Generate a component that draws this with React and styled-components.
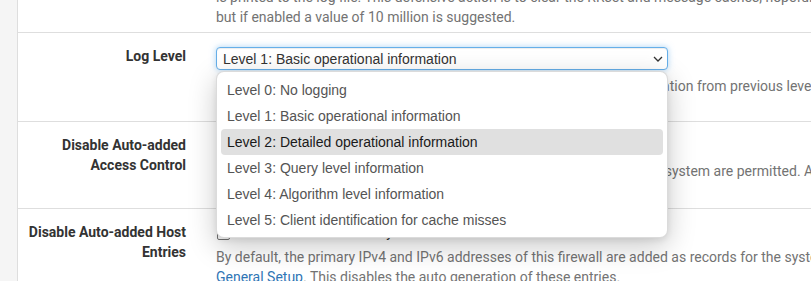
import React from "react";
import styled, { createGlobalStyle } from "styled-components";

const Global = createGlobalStyle`
  html, body { margin: 0; padding: 0; overflow: hidden; background: #fff; }
  body { font-family: Roboto, "Liberation Sans", sans-serif; font-size: 14px; color: #333; }
`;

const Page = styled.div`
  display: flex;
  width: 1400px;
  margin-top: -13px;
  min-height: 320px;
`;

const Gutter = styled.div`
  width: 17px;
  flex: none;
  background: #f5f5f5;
  border-right: 1px solid #dedede;
`;

const Panel = styled.div`
  flex: 1;
  display: flex;
  flex-direction: column;
  background: #fff;
`;

const Row = styled.div`
  display: grid;
  grid-template-columns: 183px 1fr;
  border-top: ${(p) => (p.$first ? "none" : "1px solid #dedede")};
  padding: ${(p) => (p.$first ? "0" : "13px")} 0 ${(p) => p.$pb || 5}px;
`;

const Label = styled.div`
  padding-right: 15px;
  text-align: right;
  font-weight: 700;
  line-height: 20px;
  color: #333;
`;

const Content = styled.div`
  padding-left: 15px;
  position: relative;
`;

const Help = styled.div`
  color: #737373;
  line-height: 20px;
  margin-top: ${(p) => p.$mt || 0}px;
  white-space: nowrap;
`;

const Link = styled.a`
  color: #2f75b5;
  text-decoration: underline;
`;

const SelectWrap = styled.div`
  position: relative;
  width: 452px;
  margin-top: 1px;
`;

const SelectBox = styled.div`
  box-sizing: border-box;
  height: 23px;
  border: 1px solid #66afe9;
  border-radius: 4px;
  box-shadow: inset 0 1px 1px rgba(0, 0, 0, 0.075), 0 0 6px rgba(102, 175, 233, 0.55);
  display: flex;
  align-items: center;
  justify-content: space-between;
  padding: 0 4px 0 6px;
  font-family: "Liberation Sans", Arial, sans-serif;
  font-size: 14px;
  color: #333;
  background: #fff;
`;

const Popup = styled.div`
  position: absolute;
  top: calc(100% + 1px);
  left: 0;
  right: 0;
  box-sizing: border-box;
  background: #fff;
  border: 1px solid rgba(0, 0, 0, 0.14);
  border-radius: 8px;
  padding: 5px 4px 4px;
  box-shadow: 0 8px 28px rgba(0, 0, 0, 0.22), 0 2px 6px rgba(0, 0, 0, 0.08);
  z-index: 10;
`;

const Option = styled.div`
  height: 26px;
  display: flex;
  align-items: center;
  padding-left: 6px;
  border-radius: 4px;
  font-family: "Liberation Sans", Arial, sans-serif;
  font-size: 14px;
  color: ${(p) => (p.$active ? "#1a1a1a" : "#545454")};
  background: ${(p) => (p.$active ? "#e0e0e0" : "transparent")};
`;

const CheckLine = styled.label`
  display: flex;
  align-items: center;
  gap: 6px;
  line-height: 20px;
  color: #333;
  white-space: nowrap;
`;

const Box = styled.span`
  box-sizing: border-box;
  width: 13px;
  height: 13px;
  margin: 3px 0 0 1px;
  border: 1px solid #767676;
  border-radius: 2px;
  background: #fff;
  flex: none;
`;

const Chevron = () => (
  <svg width="10" height="6" viewBox="0 0 10 6" fill="none">
    <path d="M1 1l4 4 4-4" stroke="#333" strokeWidth="1.3" />
  </svg>
);

const options = [
  "Level 0: No logging",
  "Level 1: Basic operational information",
  "Level 2: Detailed operational information",
  "Level 3: Query level information",
  "Level 4: Algorithm level information",
  "Level 5: Client identification for cache misses",
];

export default function App() {
  return (
    <>
      <Global />
      <Page>
        <Gutter />
        <Panel>
          <Row $first $pb={5}>
            <Label />
            <Content>
              <Help>
                is printed to the log file. This defensive action is to clear the RRset and message caches, hopefully flushing away any poison. The default is disabled,
              </Help>
              <Help>but if enabled a value of 10 million is suggested.</Help>
            </Content>
          </Row>
          <Row $pb={5}>
            <Label>Log Level</Label>
            <Content>
              <SelectWrap>
                <SelectBox role="combobox" aria-expanded="true">
                  <span>Level 1: Basic operational information</span>
                  <Chevron />
                </SelectBox>
                <Popup role="listbox">
                  {options.map((o, i) => (
                    <Option key={o} $active={i === 2}>
                      {o}
                    </Option>
                  ))}
                </Popup>
              </SelectWrap>
              <Help $mt={6}>
                Select the logging verbosity. Any higher level also includes all the information from previous levels.
              </Help>
              <Help>Level 1 is the default.</Help>
            </Content>
          </Row>
          <Row $pb={7}>
            <Label>
              Disable Auto-added
              <br />
              Access Control
            </Label>
            <Content>
              <CheckLine>
                <Box />
                Disable the automatically added access control entries
              </CheckLine>
              <Help $mt={6}>
                By default, IPv4 and IPv6 networks residing on internal interfaces of this system are permitted. Allowed networks must be manually configured on the Access Lists tab if the auto-added entries are disabled.
              </Help>
              <Help>&nbsp;</Help>
            </Content>
          </Row>
          <Row $pb={5}>
            <Label>
              Disable Auto-added Host
              <br />
              Entries
            </Label>
            <Content>
              <CheckLine>
                <Box />
                Disable the automatically added host entries
              </CheckLine>
              <Help $mt={5}>
                By default, the primary IPv4 and IPv6 addresses of this firewall are added as records for the system domain of this firewall as configured in System:
              </Help>
              <Help>
                <Link>General Setup</Link>. This disables the auto generation of these entries.
              </Help>
            </Content>
          </Row>
        </Panel>
      </Page>
    </>
  );
}
